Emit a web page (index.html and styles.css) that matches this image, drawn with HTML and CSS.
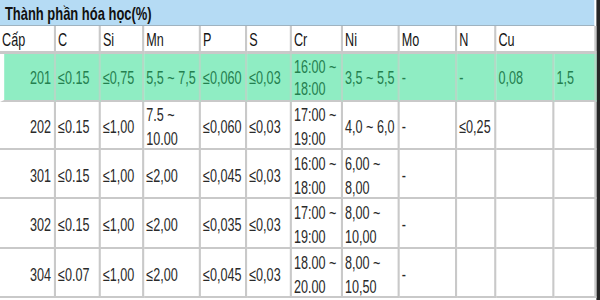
FILE: index.html
```html
<!DOCTYPE html>
<html lang="vi">
<head>
<meta charset="utf-8">
<title>Thành phần hóa học</title>
<link rel="stylesheet" href="styles.css">
</head>
<body>
<div class="frame">
<div class="page">
  <div class="sheet">
    <div class="title">Thành phần hóa học(%)</div>
    <div class="grid">
      <div class="c hd">Cấp</div><div class="c hd">C</div><div class="c hd">Si</div><div class="c hd">Mn</div><div class="c hd">P</div><div class="c hd">S</div><div class="c hd">Cr</div><div class="c hd">Ni</div><div class="c hd">Mo</div><div class="c hd">N</div><div class="c hd span2">Cu</div>

      <div class="c g num first">201</div><div class="c g">≤0.15</div><div class="c g">≤0,75</div><div class="c g">5,5 ~ 7,5</div><div class="c g">≤0,060</div><div class="c g">≤0,03</div><div class="c g">16:00 ~ 18:00</div><div class="c g">3,5 ~ 5,5</div><div class="c g">-</div><div class="c g">-</div><div class="c g">0,08</div><div class="c g">1,5</div>

      <div class="c num">202</div><div class="c">≤0.15</div><div class="c">≤1,00</div><div class="c">7.5 ~ 10.00</div><div class="c">≤0,060</div><div class="c">≤0,03</div><div class="c">17:00 ~ 19:00</div><div class="c">4,0 ~ 6,0</div><div class="c">-</div><div class="c">≤0,25</div><div class="c"></div><div class="c"></div>

      <div class="c num">301</div><div class="c">≤0.15</div><div class="c">≤1,00</div><div class="c">≤2,00</div><div class="c">≤0,045</div><div class="c">≤0,03</div><div class="c">16:00 ~ 18:00</div><div class="c">6,00 ~ 8,00</div><div class="c">-</div><div class="c"></div><div class="c"></div><div class="c"></div>

      <div class="c num">302</div><div class="c">≤0.15</div><div class="c">≤1,00</div><div class="c">≤2,00</div><div class="c">≤0,035</div><div class="c">≤0,03</div><div class="c">17:00 ~ 19:00</div><div class="c">8,00 ~ 10,00</div><div class="c">-</div><div class="c"></div><div class="c"></div><div class="c"></div>

      <div class="c num">304</div><div class="c">≤0.07</div><div class="c">≤1,00</div><div class="c">≤2,00</div><div class="c">≤0,045</div><div class="c">≤0,03</div><div class="c">18.00 ~ 20.00</div><div class="c">8,00 ~ 10,50</div><div class="c">-</div><div class="c"></div><div class="c"></div><div class="c"></div>
    </div>
  </div>
</div>
</div>
</body>
</html>
```

FILE: styles.css
```css
html, body {
  margin: 0;
  padding: 0;
  background: #ffffff;
  overflow: hidden;
}

.frame {
  width: 600px;
  height: 300px;
  overflow: hidden;
  background: #262626;
}

.page {
  width: 856px;
  height: 300px;
  transform: scaleX(0.7);
  transform-origin: 0 0;
  font-family: "Liberation Sans", Arial, sans-serif;
  font-size: 18px;
  color: #2a2a2a;
}

.sheet {
  width: 852px;
  height: 300px;
  background: #ffffff;
}

.title {
  height: 26px;
  box-sizing: border-box;
  background: #b5dbf4;
  border-bottom: 1px solid #9fb3c0;
  padding: 1px 0 0 7px;
  font-size: 18.5px;
  font-weight: bold;
  color: #111111;
  line-height: 25px;
  width: 849px;
}

.grid {
  display: grid;
  grid-template-columns: 80px 64px 62px 81px 66px 64px 73px 81px 82px 56px 83px 60px;
  grid-template-rows: 28px 48px 48px 49px 50px 49px;
}

.c {
  box-sizing: border-box;
  border-right: 3px solid #c9c9c9;
  border-bottom: 2px solid #c9c9c9;
  padding: 4px 2px 0 3px;
  display: flex;
  align-items: center;
  line-height: 24px;
}

.hd {
  border-bottom-width: 3px;
  color: #151515;
  padding-top: 3px;
}

.span2 {
  grid-column: span 2;
}

.num {
  justify-content: flex-end;
  padding-right: 4px;
}

.g {
  background: #8fedc3;
  color: #24804f;
  border-right-color: #b4d8c6;
  padding-top: 1px;
  line-height: 22px;
}

.first {
  border-left: 6px solid #ffffff;
}
```
